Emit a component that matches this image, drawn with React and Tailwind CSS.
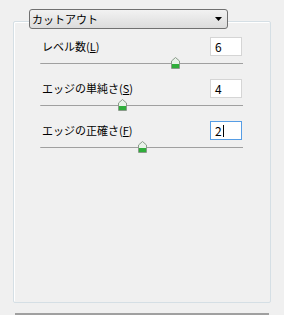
import React from 'react';

const font = { fontFamily: '"Noto Sans CJK JP", "Liberation Sans", sans-serif' };

// スライダーのつまみ
const Thumb = () => (
  <svg width="9" height="12" viewBox="0 0 9 12">
    <path d="M4.5 0.5 L8.5 4 L8.5 11.5 L0.5 11.5 L0.5 4 Z" fill="#e8f2e8" stroke="#8a9a8a" strokeWidth="1" />
    <rect x="1" y="7" width="7" height="4" fill="#2fae3a" />
  </svg>
);

const SliderRow = ({ label, hotkey, value, thumbX, focused = false }) => (
  <div className="flex flex-col h-[42px]">
    <div className="flex items-center justify-between h-[19px]">
      <span className="text-[11px] text-black leading-none pl-[28px]">
        {label}(<span className="underline">{hotkey}</span>)
      </span>
      <div
        className={`w-[32px] h-[19px] bg-white flex items-center pl-[4px] text-[12px] text-black leading-none border ${
          focused ? 'border-[#569de5]' : 'border-[#d5d5d5]'
        }`}
        style={font}
      >
        {value}
        {focused && <span className="w-px h-[12px] bg-black ml-px" />}
      </div>
    </div>
    <div className="relative mt-[7px] ml-[26px] h-[2px] w-[203px] rounded-l-full border-t border-[#a0a0a0] border-b-white">
      <div className="absolute -top-[7px]" style={{ left: thumbX }}>
        <Thumb />
      </div>
    </div>
  </div>
);

export default function App() {
  return (
    <div className="w-[284px] h-[315px] bg-[#f0f0f0] overflow-hidden pt-[9px] pl-[13px]" style={font}>
      <div className="relative z-10 ml-[16px] w-[199px] h-[20px] rounded-[3px] border border-[#707070] bg-gradient-to-b from-[#f2f2f2] to-[#dcdcdc] flex items-center justify-between pl-[2px] pr-[5px]">
        <span className="text-[11px] text-black leading-none">カットアウト</span>
        <svg width="7" height="4" viewBox="0 0 7 4">
          <path d="M0 0 L7 0 L3.5 4 Z" fill="#000" />
        </svg>
      </div>
      <div className="-mt-[8px] w-[258px] h-[282px] border border-[#d5dfe5] shadow-[inset_1px_1px_0_#fff] rounded-[2px] pt-[15px] pr-[28px]">
        <SliderRow label="レベル数" hotkey="L" value="6" thumbX={131} />
        <SliderRow label="エッジの単純さ" hotkey="S" value="4" thumbX={78} />
        <SliderRow label="エッジの正確さ" hotkey="F" value="2" thumbX={98} focused />
      </div>
      <div className="mt-[10px] ml-[2px] w-[254px] h-[2px] bg-[#a0a0a0]" />
    </div>
  );
}
